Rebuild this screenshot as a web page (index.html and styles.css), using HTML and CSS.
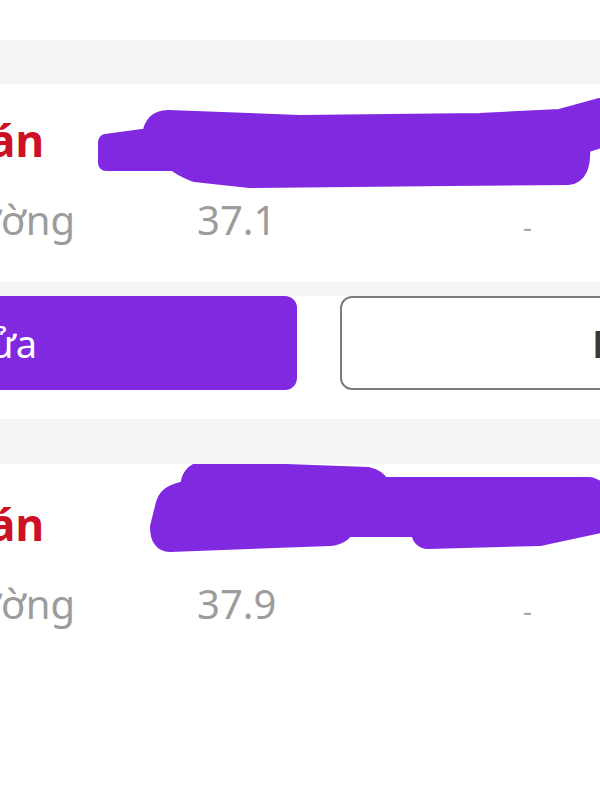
FILE: index.html
```html
<!DOCTYPE html>
<html lang="vi">
  <head>
    <meta charset="UTF-8" />
    <title>Kết quả đo</title>
    <link rel="stylesheet" href="styles.css">
  </head>
  <body>
    <div class="screen">
      <div class="top-space"></div>
      <div class="band band-top"></div>

      <div class="card card-first">
        <div class="title-row">
          <div class="clip title-clip"><span class="title">Chẩn đoán</span></div>
        </div>
        <div class="detail-row">
          <div class="clip label-clip"><span class="label">Bình thường</span></div>
          <span class="value">37.1</span>
          <span class="dash">-</span>
        </div>
        <svg class="scribble" width="600" height="198" viewBox="0 84 600 198">
          <path d="M 106 142 L 150 136 Q 152 118 168 118 L 300 123 L 480 121 L 560 117 L 600 106 L 600 140 L 582 146 Q 584 176 568 177 L 450 178 L 250 180 L 195 174 Q 180 168 175 163 L 106 163 Z" />
        </svg>
      </div>

      <div class="band band-mid"></div>

      <div class="actions">
        <button class="btn btn-primary">
          <span class="clip btn-clip"><span>Chỉnh sửa</span></span>
        </button>
        <button class="btn btn-outline">Hủy</button>
      </div>

      <div class="gap"></div>
      <div class="band band-low"></div>

      <div class="card card-second">
        <div class="title-row">
          <div class="clip title-clip"><span class="title">Chẩn đoán</span></div>
        </div>
        <div class="detail-row">
          <div class="clip label-clip"><span class="label">Bình thường</span></div>
          <span class="value">37.9</span>
          <span class="dash">-</span>
        </div>
        <svg class="scribble" width="600" height="200" viewBox="0 465 600 200">
          <path d="M 164 504 Q 168 492 188 490 Q 188 472 204 470 L 368 476 Q 378 478 382 486 L 590 486 L 600 490 L 600 526 L 540 539 L 428 542 Q 420 542 418 530 L 346 530 Q 342 538 330 539 L 170 545 Q 158 545 158 528 Z" />
        </svg>
      </div>
    </div>
  </body>
</html>
```

FILE: styles.css
```css
body {
  margin: 0;
  font-family: "Noto Sans", "Open Sans", sans-serif;
  background-color: #fff;
}
.screen {
  width: 600px;
  height: 800px;
  overflow: hidden;
}
.top-space {
  height: 40px;
}
.band {
  background-color: #f4f4f4;
}
.band-top {
  height: 44px;
}
.band-mid {
  height: 14px;
}
.band-low {
  height: 45px;
}
.gap {
  height: 29px;
}
.card {
  position: relative;
  background-color: #fff;
}
.card-first {
  height: 198px;
  padding-top: 28px;
  box-sizing: border-box;
}
.card-second {
  height: 335px;
  padding-top: 32px;
  box-sizing: border-box;
}
/* boxes whose text runs off the left edge of the screen */
.clip {
  display: flex;
  justify-content: flex-end;
  white-space: nowrap;
  flex-shrink: 0;
}
.title-row {
  height: 56px;
  display: flex;
  align-items: center;
}
.title-clip {
  width: 44px;
}
.title {
  color: #cc1126;
  font-weight: 700;
  font-size: 44px;
  line-height: 56px;
}
.detail-row {
  margin-top: 26px;
  height: 52px;
  display: flex;
  align-items: center;
  color: #9c9c9c;
  font-size: 40px;
  line-height: 52px;
}
.label-clip {
  width: 75px;
}
.value {
  margin-left: 122px;
  width: 250px;
}
.dash {
  margin-left: 76px;
  padding-top: 12px;
  color: #a8a8a8;
  font-size: 28px;
}
.scribble {
  position: absolute;
  left: 0;
  top: 0;
}
.scribble path {
  fill: #8029e1;
  stroke: #8029e1;
  stroke-width: 16;
  stroke-linejoin: round;
}
.actions {
  display: flex;
  gap: 43px;
  height: 94px;
}
.btn {
  height: 94px;
  border-radius: 12px;
  font-family: "Noto Sans", "Open Sans", sans-serif;
  font-size: 38px;
  padding: 0;
  flex-shrink: 0;
  display: flex;
  align-items: center;
}
.btn-primary {
  width: 337px;
  margin-left: -40px;
  background-color: #8029e1;
  color: #fff;
  border: none;
}
.btn-clip {
  width: 77px;
}
.btn-outline {
  width: 320px;
  background-color: #fff;
  border: 2px solid #7d7d7d;
  color: #3a3a3a;
  font-weight: 600;
  padding-left: 250px;
}
```
